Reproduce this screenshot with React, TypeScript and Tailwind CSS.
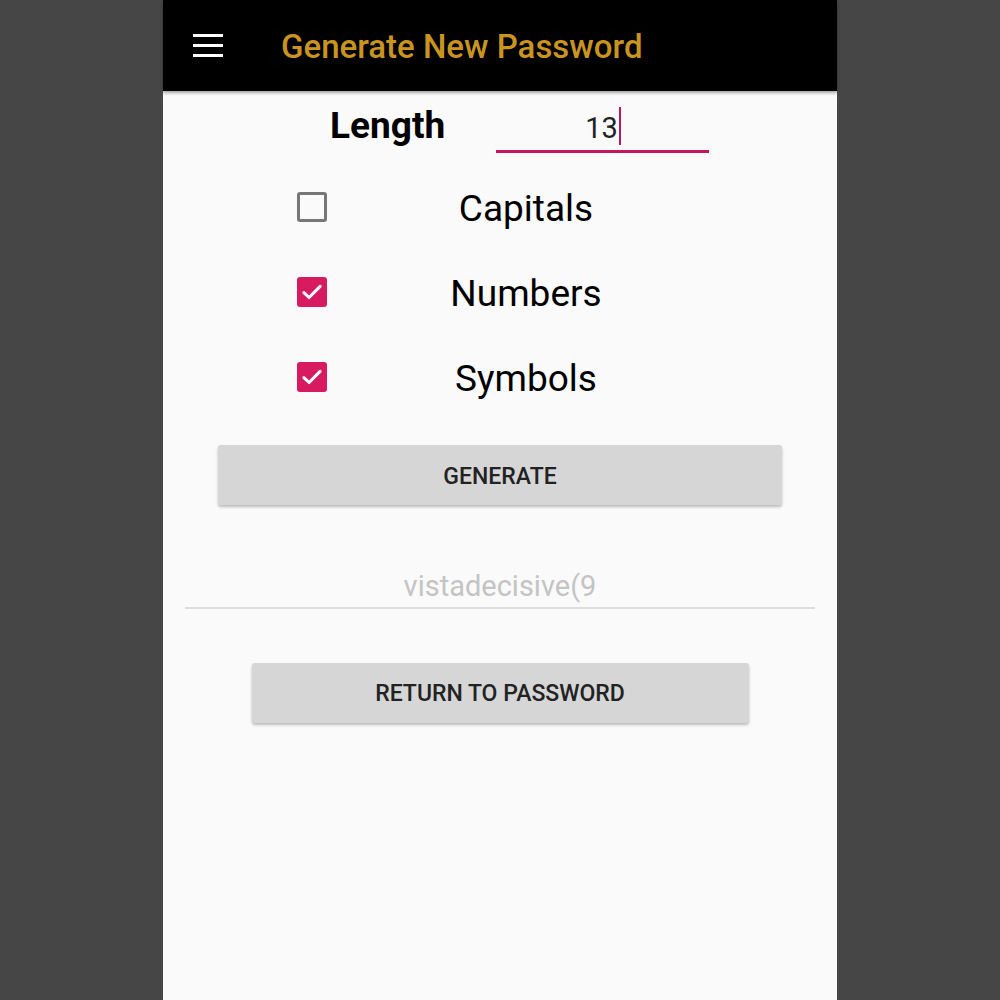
import React from "react";

function Check({ checked }: { checked: boolean }) {
  if (!checked) {
    return <div className="w-[30px] h-[30px] rounded-[3px] border-[3px] border-[#777777] box-border" />;
  }
  return (
    <div className="w-[30px] h-[30px] rounded-[3px] bg-[#d81b60] flex items-center justify-center">
      <svg width="26" height="26" viewBox="0 0 24 24" fill="none">
        <path d="M4.5 12.5l4.8 4.6L19.5 6.8" stroke="white" strokeWidth="2.8" strokeLinecap="round" strokeLinejoin="round" />
      </svg>
    </div>
  );
}

function Row({ label, checked }: { label: string; checked: boolean }) {
  return (
    <div className="h-[85px] flex items-center">
      <div className="ml-[134px] w-[30px]">
        <Check checked={checked} />
      </div>
      <div className="ml-[69px] w-[260px] text-center text-[37px] text-black pt-[4px]">{label}</div>
    </div>
  );
}

export default function App() {
  return (
    <div className="w-[1000px] h-[1000px] bg-[#464646] flex justify-center" style={{ fontFamily: "Roboto, 'Noto Sans', sans-serif" }}>
      <div className="w-[674px] h-full bg-[#fafafa] flex flex-col">
        <div className="h-[91px] bg-black flex items-center shadow-[0_2px_3px_rgba(0,0,0,0.35)] relative z-10">
          <div className="ml-[30px] w-[30px] flex flex-col gap-[7px]">
            <div className="h-[3px] bg-white" />
            <div className="h-[3px] bg-white" />
            <div className="h-[3px] bg-white" />
          </div>
          <div className="ml-[58px] text-[33px] font-medium text-[#c9951f] pt-[2px]">Generate New Password</div>
        </div>
        <div className="h-[70px] flex items-start">
          <div className="ml-[167px] mt-[12px] text-[37px] font-bold text-black leading-[46px]">Length</div>
          <div className="ml-[51px] mt-[15px] w-[213px] h-[47px] border-b-[3px] border-[#c2185b] relative flex items-center justify-center">
            <span className="text-[29px] text-[#222222] pr-[2px] pt-[2px]">13</span>
            <div className="absolute left-[123px] top-[1px] w-[2px] h-[38px] bg-[#c2185b]" />
          </div>
        </div>
        <div className="mt-[3px]">
          <Row label="Capitals" checked={false} />
          <Row label="Numbers" checked={true} />
          <Row label="Symbols" checked={true} />
        </div>
        <div className="mt-[26px] flex justify-center">
          <div className="w-[564px] h-[60px] pt-[5px] bg-[#d6d6d6] rounded-[3px] shadow-[0_2px_3px_rgba(0,0,0,0.25)] flex items-center justify-center text-[23px] font-medium text-[#222222]">
            GENERATE
          </div>
        </div>
        <div className="mt-[58px] mx-[22px] h-[46px] border-b-[2px] border-[#dddddd] flex items-start justify-center">
          <span className="text-[29px] text-[#c4c4c4] leading-[40px] mt-[3px]">vistadecisive(9</span>
        </div>
        <div className="mt-[54px] flex justify-center">
          <div className="w-[497px] h-[60px] pt-[2px] bg-[#d6d6d6] rounded-[3px] shadow-[0_2px_3px_rgba(0,0,0,0.25)] flex items-center justify-center text-[23px] font-medium text-[#222222]">
            RETURN TO PASSWORD
          </div>
        </div>
      </div>
    </div>
  );
}
